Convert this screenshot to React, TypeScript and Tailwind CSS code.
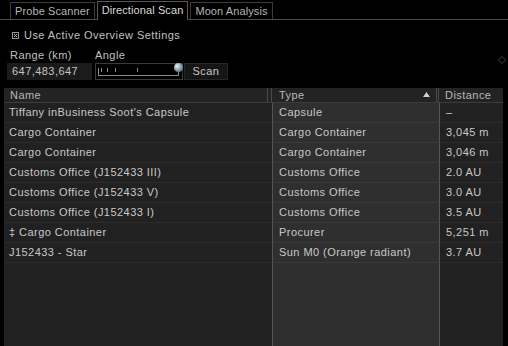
const rows = [
  { name: "Tiffany inBusiness Soot's Capsule", type: "Capsule", dist: "–" },
  { name: "Cargo Container", type: "Cargo Container", dist: "3,045 m" },
  { name: "Cargo Container", type: "Cargo Container", dist: "3,046 m" },
  { name: "Customs Office (J152433 III)", type: "Customs Office", dist: "2.0 AU" },
  { name: "Customs Office (J152433 V)", type: "Customs Office", dist: "3.0 AU" },
  { name: "Customs Office (J152433 I)", type: "Customs Office", dist: "3.5 AU" },
  { name: "‡ Cargo Container", type: "Procurer", dist: "5,251 m" },
  { name: "J152433 - Star", type: "Sun M0 (Orange radiant)", dist: "3.7 AU" },
];

function Tab({ label, active }: { label: string; active?: boolean }) {
  return (
    <div
      className={
        active
          ? "relative -mb-px h-[19px] border border-b-0 border-[#5a5a5a] bg-black px-[4px] tracking-[0.1px] text-[#d8d8d8]"
          : "mt-[2px] h-[17px] border border-b-0 border-[#3c3c3c] bg-black px-[4px] tracking-[0.1px] text-[#b4b4b4]"
      }
    >
      <span className="block leading-[16px]">{label}</span>
    </div>
  );
}

function AngleSlider() {
  return (
    <div className="relative h-[17px] w-[88px] border border-[#3a3a3a] bg-black">
      <svg width="88" height="17" className="absolute left-0 top-0">
        <g stroke="#8a8a8a" strokeWidth="1">
          <line x1="2.5" y1="4" x2="2.5" y2="12" />
          <line x1="2" y1="11.5" x2="83" y2="11.5" />
          <line x1="82.5" y1="5" x2="82.5" y2="12" />
          <line x1="5.5" y1="4" x2="5.5" y2="8" />
          <line x1="11.5" y1="4" x2="11.5" y2="8" />
          <line x1="19.5" y1="4" x2="19.5" y2="8" />
          <line x1="41.5" y1="4" x2="41.5" y2="8" />
        </g>
      </svg>
      <div className="absolute left-[78px] top-[-1px] h-[9px] w-[9px] rounded-full bg-[radial-gradient(circle_at_35%_35%,#e8f2f8,#8aa6b8_45%,#3d5566)]" />
    </div>
  );
}

export default function App() {
  return (
    <div
      className="relative h-[346px] w-[508px] overflow-hidden bg-black text-[11px] tracking-[0.45px] text-[#c8c8c8]"
      style={{ fontFamily: '"Liberation Sans", Arial, sans-serif' }}
    >
      <div className="flex items-end gap-[2px] border-b border-[#4a4a4a] pl-[10px]">
        <Tab label="Probe Scanner" />
        <Tab label="Directional Scan" active />
        <Tab label="Moon Analysis" />
      </div>

      <div className="absolute right-[3px] top-[57px] h-[6px] w-[6px] rotate-45 border border-[#2a2a2a]" />

      <div className="ml-[12px] mt-[7px] flex items-center gap-[5px] text-[#c0c0c0]">
        <svg width="7" height="7" viewBox="0 0 7 7">
          <rect x="0.5" y="0.5" width="6" height="6" fill="none" stroke="#9a9a9a" />
          <path d="M2 2 L5 5 M5 2 L2 5" stroke="#bcbcbc" strokeWidth="1" />
        </svg>
        <span>Use Active Overview Settings</span>
      </div>

      <div className="ml-[7px] mt-[4px] flex items-end">
        <div className="flex flex-col">
          <span className="ml-[3px] leading-[14px] text-[#c0c0c0]">Range (km)</span>
          <div className="mt-[1px] h-[17px] w-[85px] bg-[#1b1b1b] pl-[5px] leading-[17px] text-[#c4c4c4]">
            647,483,647
          </div>
        </div>
        <div className="ml-[3px] flex flex-col">
          <span className="leading-[14px] text-[#c0c0c0]">Angle</span>
          <div className="mt-[1px]">
            <AngleSlider />
          </div>
        </div>
        <div className="ml-px h-[17px] w-[44px] border border-[#262626] bg-[#161616] text-center leading-[15px] text-[#c8c8c8]">
          Scan
        </div>
      </div>

      <div className="ml-[4px] mt-[8px] flex h-[260px] w-[499px] flex-col">
        <div className="grid h-[15px] grid-cols-[268px_167px_64px] border-b border-[#3c3c3c] bg-[#232323] text-[#b8b8b8]">
          <div className="flex items-center">
            <span className="flex-1 pl-[6px] leading-[14px]">Name</span>
            <div className="h-full w-[5px] border-x border-[#4a4a4a]" />
          </div>
          <div className="flex items-center">
            <span className="flex-1 pl-[7px] leading-[14px]">Type</span>
            <svg width="7" height="5" viewBox="0 0 7 5" className="mr-[6px]">
              <path d="M0 5 L3.5 0 L7 5 Z" fill="#d0d0d0" />
            </svg>
            <div className="h-full w-[3px] border-x border-[#4a4a4a]" />
          </div>
          <div className="flex items-center pl-[6px] leading-[14px]">Distance</div>
        </div>

        {rows.map((r, i) => (
          <div key={i} className="grid h-[20px] grid-cols-[268px_167px_64px]">
            <div className="truncate border-b border-[#2c2c2c] bg-[#212121] pl-[5px] leading-[19px]">{r.name}</div>
            <div className="truncate border-b border-l border-[#3a3a3a] border-l-[#555] bg-[#2f2f2f] pl-[6px] leading-[19px]">
              {r.type}
            </div>
            <div className="truncate border-b border-l border-[#2c2c2c] border-l-[#555] bg-[#212121] pl-[6px] leading-[19px]">
              {r.dist}
            </div>
          </div>
        ))}

        <div className="grid flex-1 grid-cols-[268px_167px_64px]">
          <div className="bg-[#212121]" />
          <div className="border-l border-[#555] bg-[#2f2f2f]" />
          <div className="border-l border-[#555] bg-[#212121]" />
        </div>
      </div>
    </div>
  );
}
